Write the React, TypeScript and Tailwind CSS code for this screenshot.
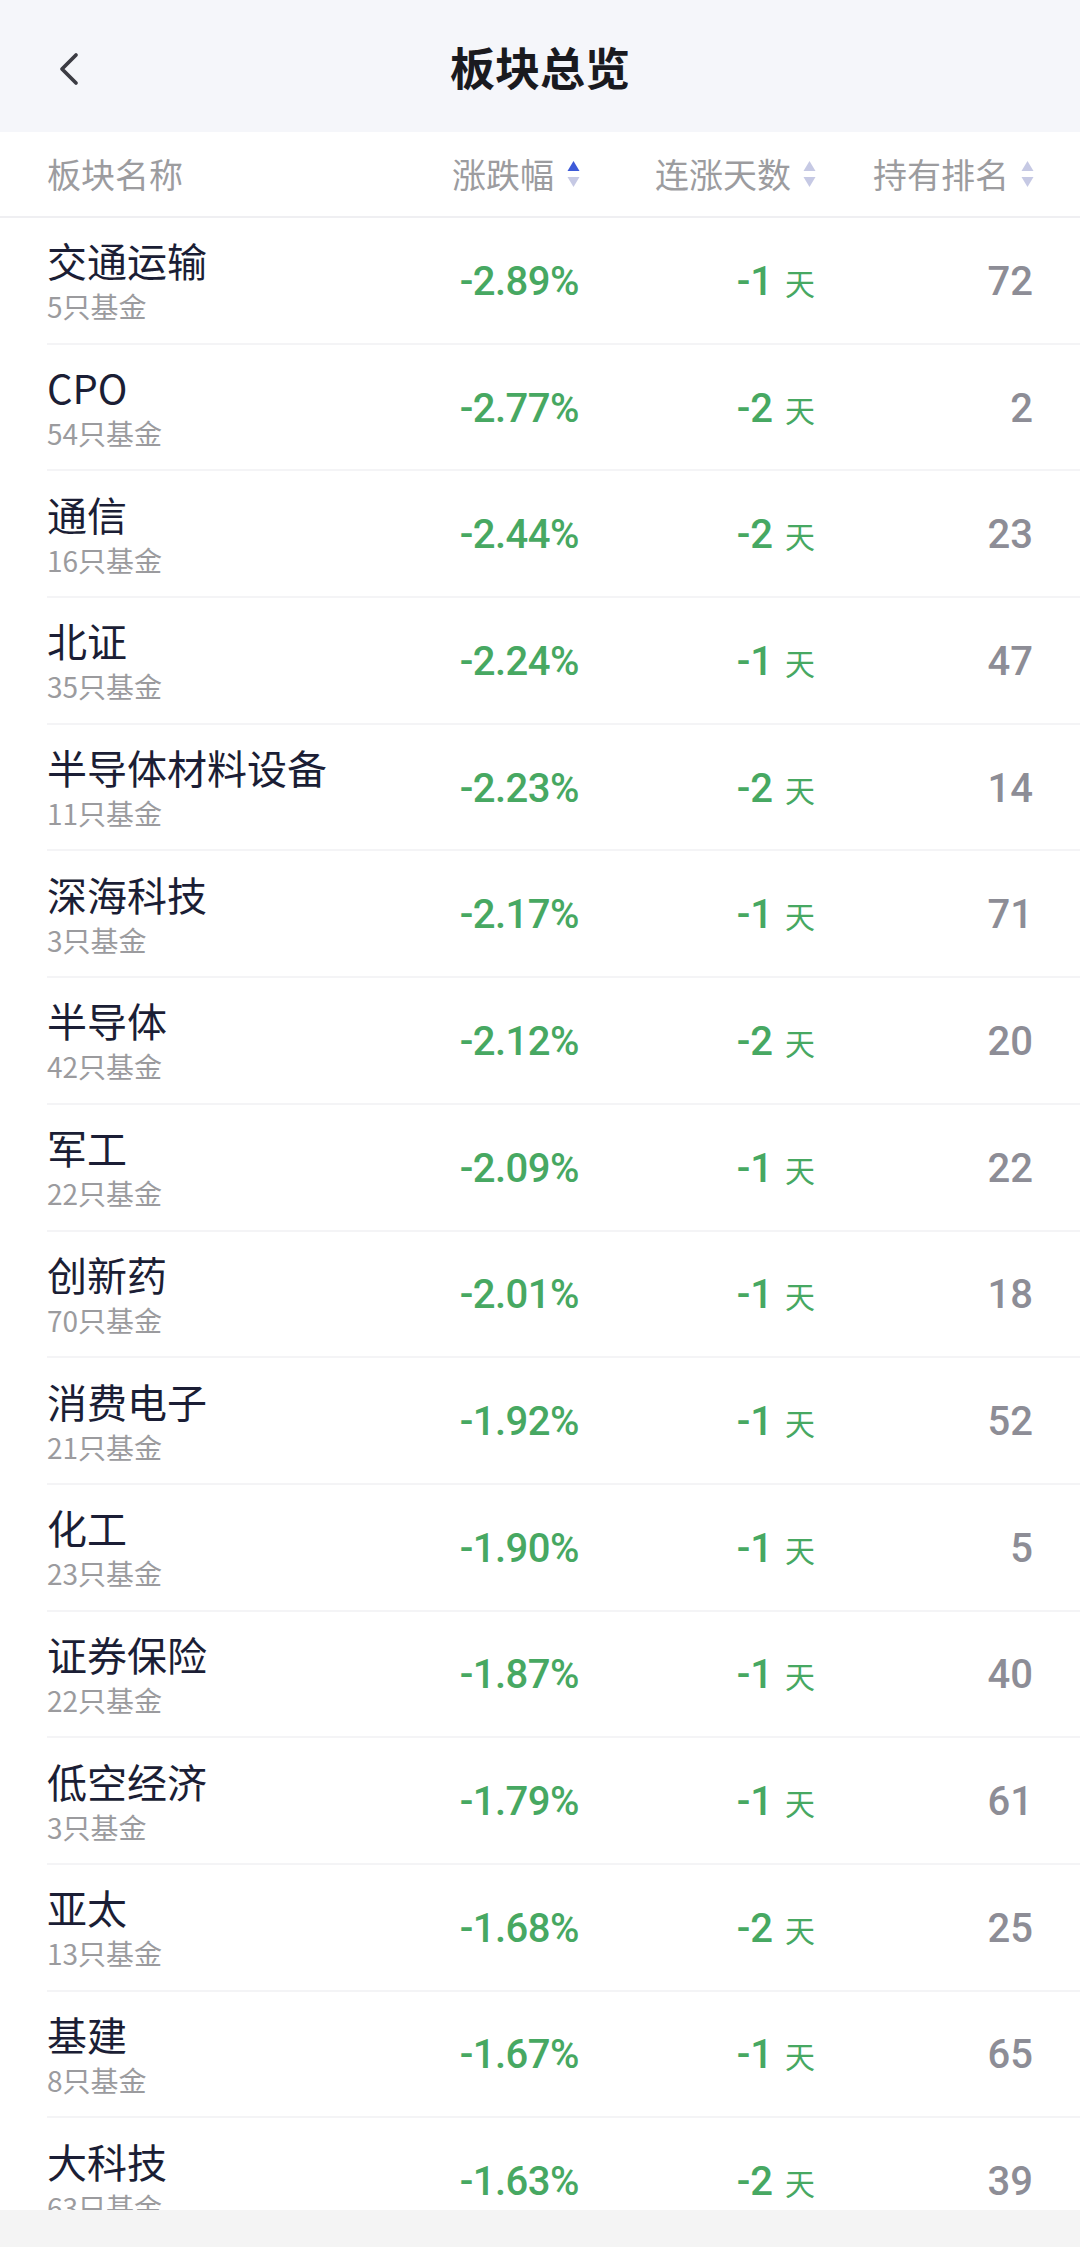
import { ChevronLeft } from 'lucide-react'

// ─── Data ──────────────────────────────────────────────────────

interface Sector {
  name: string
  funds: number
  change: string
  streak: number
  rank: number
}

const sectors: Sector[] = [
  { name: '交通运输', funds: 5, change: '-2.89%', streak: -1, rank: 72 },
  { name: 'CPO', funds: 54, change: '-2.77%', streak: -2, rank: 2 },
  { name: '通信', funds: 16, change: '-2.44%', streak: -2, rank: 23 },
  { name: '北证', funds: 35, change: '-2.24%', streak: -1, rank: 47 },
  { name: '半导体材料设备', funds: 11, change: '-2.23%', streak: -2, rank: 14 },
  { name: '深海科技', funds: 3, change: '-2.17%', streak: -1, rank: 71 },
  { name: '半导体', funds: 42, change: '-2.12%', streak: -2, rank: 20 },
  { name: '军工', funds: 22, change: '-2.09%', streak: -1, rank: 22 },
  { name: '创新药', funds: 70, change: '-2.01%', streak: -1, rank: 18 },
  { name: '消费电子', funds: 21, change: '-1.92%', streak: -1, rank: 52 },
  { name: '化工', funds: 23, change: '-1.90%', streak: -1, rank: 5 },
  { name: '证券保险', funds: 22, change: '-1.87%', streak: -1, rank: 40 },
  { name: '低空经济', funds: 3, change: '-1.79%', streak: -1, rank: 61 },
  { name: '亚太', funds: 13, change: '-1.68%', streak: -2, rank: 25 },
  { name: '基建', funds: 8, change: '-1.67%', streak: -1, rank: 65 },
  { name: '大科技', funds: 63, change: '-1.63%', streak: -2, rank: 39 },
]

const cjk = 'font-["Noto_Sans_CJK_SC","Noto_Sans",sans-serif]'
const num = 'font-["Roboto","Noto_Sans_CJK_SC",sans-serif]'

// ─── Sort arrows ───────────────────────────────────────────────

function SortIcon({ active }: { active?: 'up' | 'down' }) {
  const on = '#3d5ad8'
  const off = '#c6c9e4'
  return (
    <svg width="13" height="32" viewBox="0 0 13 32" className="shrink-0">
      <path d="M6.5 3 L12.5 13 L0.5 13 Z" fill={active === 'up' ? on : off} />
      <path d="M0.5 19 L12.5 19 L6.5 29 Z" fill={active === 'down' ? on : off} />
    </svg>
  )
}

// ─── Main ──────────────────────────────────────────────────────

export default function App() {
  return (
    <div className={`relative h-[2247px] w-[1080px] overflow-hidden bg-white ${cjk}`}>
      {/* Title bar */}
      <div className="relative flex h-[132px] items-center justify-center bg-[#f5f6fa]">
        <ChevronLeft
          size={56}
          strokeWidth={1.6}
          className="absolute left-[41px] top-[41px] text-[#3c3c44]"
        />
        <h1 className="text-[45px] font-bold leading-none text-[#1a1a1f]">板块总览</h1>
      </div>

      {/* Column header */}
      <div className="flex h-[86px] items-center border-b-2 border-[#efeff2] pl-[47px] pr-[46px] text-[34px] leading-none text-[#9c9c9f]">
        <div className="flex-1">板块名称</div>
        <div className="flex w-[200px] items-center justify-end gap-[13px]">
          涨跌幅
          <SortIcon active="up" />
        </div>
        <div className="flex w-[236px] items-center justify-end gap-[12px]">
          连涨天数
          <SortIcon />
        </div>
        <div className="flex w-[218px] items-center justify-end gap-[12px]">
          持有排名
          <SortIcon />
        </div>
      </div>

      {/* Rows */}
      {sectors.map((s) => (
        <div key={s.name} className="h-[126.7px] pl-[47px]">
          <div className="flex h-full items-center border-b-2 border-[#f4f4f6] pr-[47px]">
            <div className="flex flex-1 flex-col pt-[3px]">
              <span className="text-[40px] leading-[46px] text-[#1b1e35]">
                {s.name}
              </span>
              <span className="mt-[3px] text-[28px] leading-[40px] text-[#9b9b9e]">
                {s.funds}只基金
              </span>
            </div>
            <div
              className={`w-[200px] pt-[3px] text-right text-[40px] font-medium leading-none tracking-[-0.5px] text-[#47a862] ${num}`}
            >
              {s.change}
            </div>
            <div className="flex w-[236px] items-baseline justify-end pt-[3px] text-[#47a862]">
              <span className={`text-[40px] font-medium leading-none ${num}`}>{s.streak}</span>
              <span className="ml-[12px] text-[30px] leading-none">天</span>
            </div>
            <div
              className={`w-[218px] pt-[3px] text-right text-[40px] font-medium leading-none text-[#8d8d96] ${num}`}
            >
              {s.rank}
            </div>
          </div>
        </div>
      ))}

      {/* Bottom bar */}
      <div className="absolute bottom-0 left-0 h-[37px] w-full bg-[#f4f4f4]" />
    </div>
  )
}
